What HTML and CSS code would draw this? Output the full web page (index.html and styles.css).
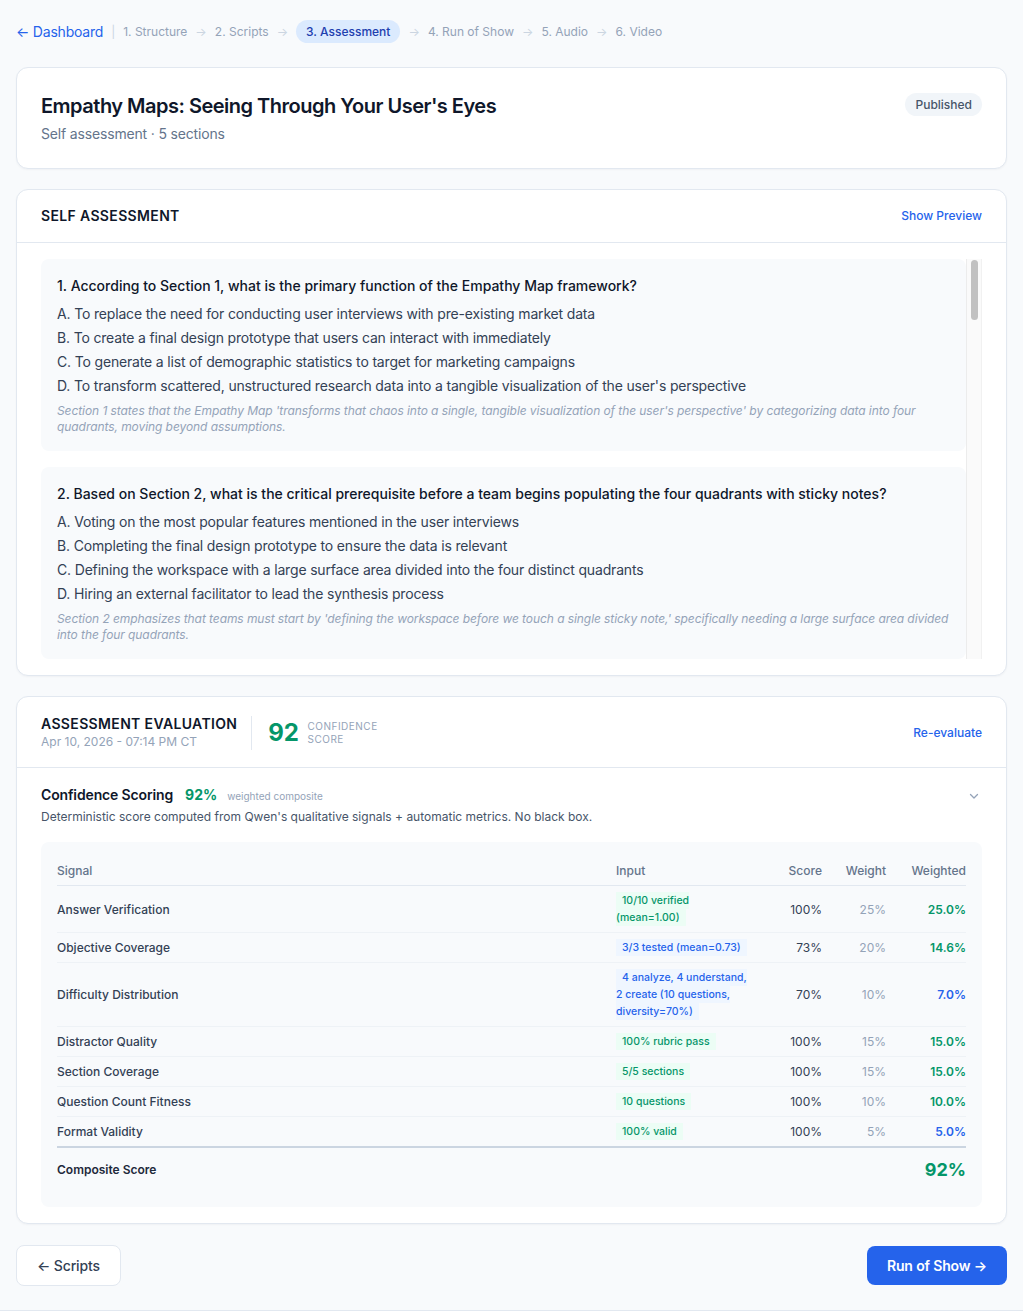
FILE: index.html
```html
<!DOCTYPE html>
<html lang="en">
<head>
    <meta charset="UTF-8">
    <meta name="viewport" content="width=device-width, initial-scale=1.0">
    <title>Assessment · Empathy Maps</title>
    <link rel="stylesheet" href="styles.css">
</head>
<body>
    <div class="page-wrap">
    <div class="page">
        <nav class="steps">
            <a href="#" class="back-link">← Dashboard</a>
            <span class="steps-sep">|</span>
            <span class="step">1. Structure</span>
            <span class="step-arrow">→</span>
            <span class="step">2. Scripts</span>
            <span class="step-arrow">→</span>
            <span class="step step-active">3. Assessment</span>
            <span class="step-arrow">→</span>
            <span class="step">4. Run of Show</span>
            <span class="step-arrow">→</span>
            <span class="step">5. Audio</span>
            <span class="step-arrow">→</span>
            <span class="step">6. Video</span>
        </nav>

        <div class="card course-card">
            <div>
                <h1 class="course-title">Empathy Maps: Seeing Through Your User's Eyes</h1>
                <p class="course-meta">Self assessment · 5 sections</p>
            </div>
            <span class="status-badge">Published</span>
        </div>

        <div class="card">
            <div class="card-header">
                <h2 class="card-title">Self Assessment</h2>
                <a href="#" class="text-link">Show Preview</a>
            </div>
            <div class="card-body">
                <div class="question-scroll">
                    <div class="question-list" id="questionList"></div>
                    <div class="scroll-track"><div class="scroll-thumb"></div></div>
                </div>
            </div>
        </div>

        <div class="card">
            <div class="card-header eval-header">
                <div class="eval-left">
                    <div>
                        <h2 class="card-title">Assessment Evaluation</h2>
                        <p class="eval-date">Apr 10, 2026 - 07:14 PM CT</p>
                    </div>
                    <div class="eval-score">
                        <span class="eval-number">92</span>
                        <span class="eval-label">Confidence<br>Score</span>
                    </div>
                </div>
                <a href="#" class="text-link">Re-evaluate</a>
            </div>
            <div class="scoring">
                <div class="scoring-head">
                    <div class="scoring-title">
                        <span class="scoring-name">Confidence Scoring</span>
                        <span class="scoring-pct">92%</span>
                        <span class="scoring-note">weighted composite</span>
                    </div>
                    <svg class="chevron" width="12" height="12" viewBox="0 0 12 12" fill="none">
                        <path d="M2.5 4.5 L6 8 L9.5 4.5" stroke="#94a3b8" stroke-width="1.3" stroke-linecap="round" stroke-linejoin="round"/>
                    </svg>
                </div>
                <p class="scoring-desc">Deterministic score computed from Qwen's qualitative signals + automatic metrics. No black box.</p>

                <div class="signal-box">
                    <table class="signal-table">
                        <colgroup>
                            <col>
                            <col class="col-input">
                            <col class="col-score">
                            <col class="col-weight">
                            <col class="col-weighted">
                        </colgroup>
                        <thead>
                            <tr>
                                <th>Signal</th>
                                <th>Input</th>
                                <th class="num">Score</th>
                                <th class="num">Weight</th>
                                <th class="num">Weighted</th>
                            </tr>
                        </thead>
                        <tbody id="signalRows"></tbody>
                        <tfoot>
                            <tr>
                                <td colspan="4">Composite Score</td>
                                <td class="num composite">92%</td>
                            </tr>
                        </tfoot>
                    </table>
                </div>
            </div>
        </div>

        <div class="actions">
            <a href="#" class="btn btn-outline">← Scripts</a>
            <a href="#" class="btn btn-primary">Run of Show →</a>
        </div>
    </div>
    </div>

    <script>
        const questions = [
            {
                q: 'According to Section 1, what is the primary function of the Empathy Map framework?',
                options: [
                    'To replace the need for conducting user interviews with pre-existing market data',
                    'To create a final design prototype that users can interact with immediately',
                    'To generate a list of demographic statistics to target for marketing campaigns',
                    "To transform scattered, unstructured research data into a tangible visualization of the user's perspective"
                ],
                why: "Section 1 states that the Empathy Map 'transforms that chaos into a single, tangible visualization of the user's perspective' by categorizing data into four quadrants, moving beyond assumptions."
            },
            {
                q: 'Based on Section 2, what is the critical prerequisite before a team begins populating the four quadrants with sticky notes?',
                options: [
                    'Voting on the most popular features mentioned in the user interviews',
                    'Completing the final design prototype to ensure the data is relevant',
                    'Defining the workspace with a large surface area divided into the four distinct quadrants',
                    'Hiring an external facilitator to lead the synthesis process'
                ],
                why: "Section 2 emphasizes that teams must start by 'defining the workspace before we touch a single sticky note,' specifically needing a large surface area divided into the four quadrants."
            },
            {
                q: 'In Section 3, which quadrant captures direct quotes the user spoke during research?',
                options: ['Thinks', 'Says', 'Does', 'Feels'],
                why: "Section 3 describes the Says quadrant as the place for verbatim quotes gathered during interviews."
            },
            {
                q: 'Why does Section 3 separate the Thinks quadrant from the Says quadrant?',
                options: [
                    'Because users often think the same thing they say',
                    'Because it keeps the map symmetrical',
                    'Because what users privately believe may differ from what they are willing to say out loud',
                    'Because thoughts are easier to measure than speech'
                ],
                why: "Section 3 notes that the gap between Says and Thinks often reveals hidden motivations and hesitations."
            },
            {
                q: 'Which activity from Section 4 best describes clustering notes within a quadrant?',
                options: [
                    'Deleting duplicate sticky notes',
                    'Grouping related observations to surface recurring themes',
                    'Ranking notes by the seniority of the person who wrote them',
                    'Moving every note into the Does quadrant'
                ],
                why: "Section 4 explains that clustering reveals patterns that single observations cannot."
            },
            {
                q: 'Create a one-sentence insight statement using a contradiction between the Does and Feels quadrants.',
                options: [
                    'The user logs in daily but feels anxious about losing progress',
                    'The user likes blue buttons',
                    'The user has a laptop',
                    'The user completed the survey'
                ],
                why: "Section 4 frames insights as tensions between behaviour and emotion."
            },
            {
                q: 'According to Section 5, what should a team do with the finished Empathy Map?',
                options: [
                    'Archive it once the workshop ends',
                    'Use it to frame problem statements and guide ideation',
                    'Share it only with stakeholders outside the team',
                    'Replace it with a customer journey map immediately'
                ],
                why: "Section 5 positions the map as the bridge from research to problem definition."
            },
            {
                q: 'Which of the following is a common pitfall described in Section 5?',
                options: [
                    'Filling quadrants with team assumptions rather than observed data',
                    'Using too many colours of sticky notes',
                    'Inviting users to review the map',
                    'Holding the session in a large room'
                ],
                why: "Section 5 warns that maps built on assumptions reinforce existing bias instead of revealing the user."
            },
            {
                q: 'Analyze the role of the Feels quadrant in prioritizing design opportunities.',
                options: [
                    'It has no influence on prioritization',
                    'Strong emotions highlight moments where design can have the greatest impact',
                    'It only matters for marketing copy',
                    'It replaces usability testing'
                ],
                why: "Section 3 links intense emotions to high-value opportunities."
            },
            {
                q: 'What is the best next step after identifying a gap between what users say and do?',
                options: [
                    'Ignore the gap as noise',
                    'Investigate the gap through follow-up research and observation',
                    'Trust only what users say',
                    'Remove the Does quadrant'
                ],
                why: "Section 5 recommends treating gaps as prompts for deeper research."
            }
        ];

        const list = document.getElementById('questionList');
        list.innerHTML = questions.map((item, i) => `
            <div class="question">
                <p class="question-text">${i + 1}. ${item.q}</p>
                ${item.options.map((o, j) => `<p class="option">${'ABCD'[j]}. ${o}</p>`).join('')}
                <p class="explanation">${item.why}</p>
            </div>
        `).join('');

        const signals = [
            {name: 'Answer Verification', input: '10/10 verified (mean=1.00)', tone: 'green', score: '100%', weight: '25%', weighted: '25.0%', wTone: 'green'},
            {name: 'Objective Coverage', input: '3/3 tested (mean=0.73)', tone: 'blue', score: '73%', weight: '20%', weighted: '14.6%', wTone: 'green'},
            {name: 'Difficulty Distribution', input: '4 analyze, 4 understand, 2 create (10 questions, diversity=70%)', tone: 'blue', score: '70%', weight: '10%', weighted: '7.0%', wTone: 'blue'},
            {name: 'Distractor Quality', input: '100% rubric pass', tone: 'green', score: '100%', weight: '15%', weighted: '15.0%', wTone: 'green'},
            {name: 'Section Coverage', input: '5/5 sections', tone: 'green', score: '100%', weight: '15%', weighted: '15.0%', wTone: 'green'},
            {name: 'Question Count Fitness', input: '10 questions', tone: 'green', score: '100%', weight: '10%', weighted: '10.0%', wTone: 'green'},
            {name: 'Format Validity', input: '100% valid', tone: 'green', score: '100%', weight: '5%', weighted: '5.0%', wTone: 'blue'}
        ];

        document.getElementById('signalRows').innerHTML = signals.map(s => `
            <tr>
                <td class="signal-name">${s.name}</td>
                <td class="input-cell"><span class="chip chip-${s.tone}">${s.input}</span></td>
                <td class="num">${s.score}</td>
                <td class="num weight">${s.weight}</td>
                <td class="num weighted ${s.wTone}">${s.weighted}</td>
            </tr>
        `).join('');
    </script>
</body>
</html>
```

FILE: styles.css
```css
* {
    margin: 0;
    padding: 0;
    box-sizing: border-box;
}

body {
    background: #f8fafc;
    color: #0f172a;
    font-family: Inter, 'Liberation Sans', sans-serif;
    font-size: 14px;
}

a {
    text-decoration: none;
}

.page-wrap {
    border-bottom: 1px solid #e2e8f0;
}

.page {
    padding: 20px 16px 24px;
}

/* step navigation */
.steps {
    display: flex;
    align-items: center;
    gap: 8px;
    margin-bottom: 24px;
    font-size: 12px;
    line-height: 23px;
}

.back-link {
    color: #2563eb;
    font-size: 14px;
    letter-spacing: -0.015em;
}

.steps-sep {
    color: #cbd5e1;
}

.step {
    color: #94a3b8;
}

.step-arrow {
    color: #cbd5e1;
    font-size: 12px;
}

.step-active {
    background: #dbeafe;
    color: #1e40af;
    font-weight: 500;
    padding: 0 10px;
    border-radius: 999px;
}

/* cards */
.card {
    background: white;
    border: 1px solid #e2e8f0;
    border-radius: 12px;
    box-shadow: 0 1px 2px rgba(15, 23, 42, 0.04);
    margin-bottom: 20px;
}

.course-card {
    display: flex;
    justify-content: space-between;
    align-items: flex-start;
    padding: 24px;
}

.course-title {
    font-size: 20px;
    font-weight: 600;
    line-height: 28px;
    letter-spacing: -0.025em;
    color: #0f172a;
}

.course-meta {
    margin-top: 4px;
    font-size: 14px;
    line-height: 20px;
    letter-spacing: -0.012em;
    color: #64748b;
}

.status-badge {
    background: #f1f5f9;
    color: #475569;
    font-size: 12px;
    font-weight: 500;
    line-height: 23px;
    padding: 0 10px;
    margin-top: 1px;
    border-radius: 999px;
}

.card-header {
    display: flex;
    justify-content: space-between;
    align-items: center;
    padding: 17px 24px 18px;
    border-bottom: 1px solid #e2e8f0;
}

.card-title {
    font-size: 14px;
    font-weight: 600;
    line-height: 17px;
    letter-spacing: 0.025em;
    text-transform: uppercase;
    color: #0f172a;
}

.text-link {
    color: #2563eb;
    font-size: 12px;
    font-weight: 500;
}

.card-body {
    padding: 16px 24px;
}

/* question list with its scrollbar rail */
.question-scroll {
    display: flex;
    height: 400px;
}

.question-list {
    flex: 1;
    overflow: hidden;
    display: flex;
    flex-direction: column;
    gap: 16px;
}

.scroll-track {
    width: 16px;
    background: #fafafa;
    border-left: 1px solid #ececec;
    border-right: 1px solid #f1f1f1;
    padding: 1px 3px 0 4px;
}

.scroll-thumb {
    height: 60px;
    background: #c1c1c1;
    border-radius: 4px;
}

.question {
    background: #f8fafc;
    border-radius: 8px;
    padding: 16px;
    flex-shrink: 0;
}

.question-text {
    font-size: 14px;
    font-weight: 500;
    line-height: 22px;
    color: #0f172a;
    margin-bottom: 5px;
}

.option {
    font-size: 14px;
    line-height: 24px;
    letter-spacing: -0.012em;
    color: #334155;
}

.explanation {
    margin-top: 5px;
    font-size: 12px;
    line-height: 16px;
    letter-spacing: -0.006em;
    font-style: italic;
    color: #94a3b8;
}

/* evaluation */
.eval-header {
    padding: 18px 24px 17px;
}

.eval-left {
    display: flex;
    align-items: center;
    gap: 14px;
}

.eval-date {
    margin-top: 2px;
    font-size: 12px;
    line-height: 16px;
    color: #94a3b8;
}

.eval-score {
    display: flex;
    align-items: center;
    gap: 9px;
    border-left: 1px solid #e2e8f0;
    padding-left: 16px;
    height: 34px;
}

.eval-number {
    font-size: 24px;
    font-weight: 700;
    letter-spacing: -0.01em;
    color: #059669;
}

.eval-label {
    font-size: 10px;
    line-height: 13px;
    letter-spacing: 0.05em;
    text-transform: uppercase;
    color: #94a3b8;
}

.scoring {
    padding: 18px 24px 16px;
}

.scoring-head {
    display: flex;
    justify-content: space-between;
    align-items: center;
}

.scoring-title {
    display: flex;
    align-items: baseline;
    gap: 12px;
    line-height: 18px;
}

.scoring-name {
    font-size: 14px;
    font-weight: 600;
    letter-spacing: -0.01em;
}

.scoring-pct {
    font-size: 14px;
    font-weight: 700;
    color: #059669;
    margin-right: -2px;
}

.scoring-note {
    font-size: 10px;
    color: #94a3b8;
}

.chevron {
    margin-right: 2px;
}

.scoring-desc {
    margin-top: 4px;
    font-size: 12px;
    line-height: 16px;
    color: #475569;
}

.signal-box {
    margin-top: 17px;
    background: #f8fafc;
    border-radius: 8px;
    padding: 16px;
}

.signal-table {
    width: 100%;
    border-collapse: collapse;
    table-layout: fixed;
    font-size: 12px;
}

.col-input {
    width: 146px;
}

.col-score {
    width: 60px;
}

.col-weight {
    width: 64px;
}

.col-weighted {
    width: 80px;
}

.signal-table th {
    text-align: left;
    font-weight: 500;
    color: #64748b;
    line-height: 16px;
    padding: 5px 0 6px;
    border-bottom: 1px solid #e2e8f0;
}

.signal-table td {
    padding: 6px 0;
    line-height: 17px;
    color: #334155;
    vertical-align: middle;
    border-bottom: 1px solid #eef2f6;
}

.signal-table .input-cell {
    font-size: 10.5px;
    line-height: 17px;
    padding-right: 12px;
}

.signal-table .num {
    text-align: right;
}

.signal-name {
    font-weight: 500;
}

.chip {
    font-weight: 500;
    padding: 2px 6px;
}

.chip-green {
    background: #ecfdf5;
    color: #059669;
}

.chip-blue {
    background: #eff6ff;
    color: #2563eb;
}

.signal-table .weight {
    color: #94a3b8;
}

.signal-table .weighted {
    font-weight: 600;
}

.signal-table .weighted.green {
    color: #059669;
}

.signal-table .weighted.blue {
    color: #2563eb;
}

.signal-table tbody tr:last-child td {
    border-bottom: 2px solid #cbd5e1;
}

.signal-table tfoot td {
    border-bottom: none;
    padding: 12px 0 11px;
    line-height: 20px;
    font-weight: 600;
    color: #1e293b;
}

.signal-table tfoot .composite {
    font-size: 18px;
    font-weight: 700;
    color: #059669;
}

/* footer actions */
.actions {
    display: flex;
    justify-content: space-between;
    align-items: center;
    margin-top: 21px;
}

.btn {
    font-size: 14px;
    font-weight: 500;
    border-radius: 8px;
    display: inline-block;
    letter-spacing: -0.01em;
}

.btn-outline {
    background: white;
    border: 1px solid #e2e8f0;
    color: #334155;
    padding: 10px 20px;
    line-height: 19px;
}

.btn-primary {
    background: #2563eb;
    color: white;
    font-weight: 600;
    padding: 10px 20px;
    line-height: 19px;
}
```
